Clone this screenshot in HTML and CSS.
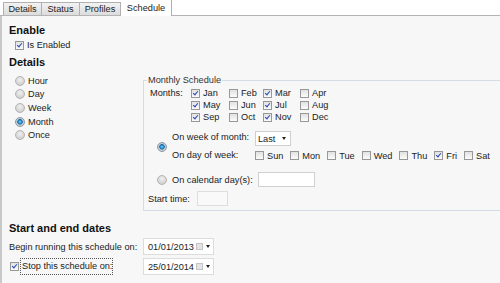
FILE: index.html
```html
<!DOCTYPE html>
<html>
<head>
<meta charset="utf-8">
<link rel="stylesheet" href="styles.css">
</head>
<body>
<div class="tabs">
  <div class="tab tab-details">Details</div>
  <div class="tab tab-status">Status</div>
  <div class="tab tab-profiles">Profiles</div>
  <div class="tab tab-schedule active">Schedule</div>
</div>
<div class="panel">
  <h3 class="heading">Enable</h3>
  <label class="check-row"><input type="checkbox" class="cb" checked><span>Is Enabled</span></label>
  <h3 class="heading h-details">Details</h3>
  <div class="details">
    <div class="freq">
      <label class="radio-row"><input type="radio" name="freq" class="rb"><span>Hour</span></label>
      <label class="radio-row"><input type="radio" name="freq" class="rb"><span>Day</span></label>
      <label class="radio-row"><input type="radio" name="freq" class="rb"><span>Week</span></label>
      <label class="radio-row"><input type="radio" name="freq" class="rb" checked><span>Month</span></label>
      <label class="radio-row"><input type="radio" name="freq" class="rb"><span>Once</span></label>
    </div>
    <fieldset class="monthly">
      <legend class="legend">Monthly Schedule</legend>
      <div class="months">
        <span class="months-label">Months:</span>
        <div class="month-grid">
          <label class="opt"><input type="checkbox" class="cb" checked><span>Jan</span></label>
          <label class="opt"><input type="checkbox" class="cb"><span>Feb</span></label>
          <label class="opt"><input type="checkbox" class="cb" checked><span>Mar</span></label>
          <label class="opt"><input type="checkbox" class="cb"><span>Apr</span></label>
          <label class="opt"><input type="checkbox" class="cb" checked><span>May</span></label>
          <label class="opt"><input type="checkbox" class="cb"><span>Jun</span></label>
          <label class="opt"><input type="checkbox" class="cb" checked><span>Jul</span></label>
          <label class="opt"><input type="checkbox" class="cb"><span>Aug</span></label>
          <label class="opt"><input type="checkbox" class="cb" checked><span>Sep</span></label>
          <label class="opt"><input type="checkbox" class="cb"><span>Oct</span></label>
          <label class="opt"><input type="checkbox" class="cb" checked><span>Nov</span></label>
          <label class="opt"><input type="checkbox" class="cb"><span>Dec</span></label>
        </div>
      </div>
      <div class="week-group">
        <input type="radio" name="mode" class="rb" checked>
        <div class="week-grid">
          <span class="wlabel">On week of month:</span>
          <span class="select">Last<i class="caret"></i></span>
          <span class="wlabel">On day of week:</span>
          <div class="days">
            <label class="opt"><input type="checkbox" class="cb"><span>Sun</span></label>
            <label class="opt"><input type="checkbox" class="cb"><span>Mon</span></label>
            <label class="opt"><input type="checkbox" class="cb"><span>Tue</span></label>
            <label class="opt"><input type="checkbox" class="cb"><span>Wed</span></label>
            <label class="opt"><input type="checkbox" class="cb"><span>Thu</span></label>
            <label class="opt"><input type="checkbox" class="cb" checked><span>Fri</span></label>
            <label class="opt"><input type="checkbox" class="cb"><span>Sat</span></label>
          </div>
        </div>
      </div>
      <div class="cal-row">
        <input type="radio" name="mode" class="rb">
        <span class="cal-label">On calendar day(s):</span>
        <span class="textbox cal-box"></span>
      </div>
      <div class="time-row">
        <span class="time-label">Start time:</span>
        <span class="textbox time-box"></span>
      </div>
    </fieldset>
  </div>
  <h3 class="heading h-dates">Start and end dates</h3>
  <div class="date-row">
    <span class="date-label">Begin running this schedule on:</span>
    <span class="datebox">01/01/2013<i class="cal-icon"></i><i class="caret"></i></span>
  </div>
  <div class="date-row">
    <label class="date-label stop"><input type="checkbox" class="cb" checked><span class="focus">Stop this schedule on:</span></label>
    <span class="datebox">25/01/2014<i class="cal-icon"></i><i class="caret"></i></span>
  </div>
</div>
</body>
</html>
```
FILE: styles.css
```css
html, body {
  margin: 0;
  padding: 0;
  background: #fff;
  overflow: hidden;
}
body {
  width: 500px;
  height: 283px;
  font-family: "Liberation Sans", Arial, sans-serif;
  font-size: 9.2px;
  color: #222;
}

/* tabs */
.tabs {
  display: flex;
  align-items: flex-end;
  height: 16px;
  box-sizing: border-box;
  padding-left: 3px;
  border-bottom: 1px solid #b4b4b4;
}
.tab {
  box-sizing: border-box;
  height: 13px;
  line-height: 12px;
  text-align: center;
  border: 1px solid #b0b0b0;
  border-bottom: none;
  border-left: none;
  background: linear-gradient(#f2f2f2, #dcdcdc);
  color: #222;
}
.tab:first-child {
  border-left: 1px solid #b0b0b0;
}
.tab-details { width: 39px; }
.tab-status { width: 38px; }
.tab-profiles { width: 41px; }
.tab-schedule { width: 51px; }
.tab.active {
  height: 17px;
  line-height: 17px;
  margin-bottom: -1px;
  background: #fff;
  border-right: 1px solid #b0b0b0;
}

/* panel */
.panel {
  height: 267px;
  box-sizing: border-box;
  background: #f7f7f7;
  border-left: 2px solid #c9c9c9;
  padding: 8px 0 0 7px;
  overflow: hidden;
}
.heading {
  margin: 0;
  font-size: 11px;
  line-height: 13px;
  font-weight: bold;
  color: #111;
}
.h-details { margin-top: 5px; }
.h-dates { margin-top: 11px; }

/* checkbox & radio */
.cb {
  appearance: none;
  -webkit-appearance: none;
  margin: 0;
  width: 9px;
  height: 9px;
  box-sizing: border-box;
  border: 1px solid #989898;
  background: linear-gradient(#e2e2e2, #fbfbfb);
  position: relative;
  flex: none;
}
.cb:checked::after {
  content: "";
  position: absolute;
  left: 2px;
  top: 0;
  width: 2px;
  height: 4px;
  border: solid #2747b5;
  border-width: 0 1.5px 1.5px 0;
  transform: rotate(40deg);
}
.rb {
  appearance: none;
  -webkit-appearance: none;
  margin: 0;
  width: 10px;
  height: 10px;
  box-sizing: border-box;
  border-radius: 50%;
  border: 1px solid #b4b4b4;
  background: radial-gradient(circle at 50% 35%, #f0f0f0 0, #d6d6d6 60%, #c4c4c4 100%);
  flex: none;
}
.rb:checked {
  border-color: #8a98a6;
  background: radial-gradient(circle at 50% 48%, #7fd6ff 0, #2a96d8 25%, #1f6aa3 42%, #b9c4ce 52%, #e2e6ea 100%);
}

.check-row {
  display: flex;
  align-items: center;
  gap: 3px;
  height: 12px;
  margin: 2px 0 0 6px;
}

/* details */
.details {
  display: flex;
  align-items: flex-start;
}
.freq {
  width: 134px;
  flex: none;
  padding-top: 5px;
}
.radio-row {
  display: flex;
  align-items: center;
  gap: 3px;
  height: 13.6px;
  margin-left: 6px;
}
.monthly {
  flex: 1;
  margin: 5px -30px 0 0;
  padding: 0 0 4px 4px;
  border: 1px solid #d3dde7;
  min-width: 0;
}
.legend {
  padding: 0 1px;
  margin-left: -1px;
  line-height: 12px;
  color: #333;
}
.months {
  display: flex;
  padding-top: 1px;
}
.months-label {
  width: 43px;
  padding-left: 2px;
  box-sizing: border-box;
  line-height: 12px;
}
.month-grid {
  display: grid;
  grid-template-columns: 38px 34px 37px auto;
  grid-auto-rows: 12px;
}
.opt {
  display: flex;
  align-items: center;
  gap: 3px;
}

.week-group {
  display: flex;
  align-items: center;
  margin: 8px 0 0 9px;
}
.week-group .rb { margin-right: 5px; }
.week-grid {
  display: grid;
  grid-template-columns: 83px auto;
  grid-template-rows: 15px 15px;
  row-gap: 2px;
}
.wlabel {
  line-height: 12px;
}
.week-grid .wlabel:nth-of-type(3) {
  line-height: 15px;
}
.select {
  display: flex;
  align-items: center;
  width: 36px;
  height: 15px;
  box-sizing: border-box;
  border: 1px solid #cfcfcf;
  background: #fff;
  padding-left: 2px;
}
.caret {
  width: 0;
  height: 0;
  border-left: 2.5px solid transparent;
  border-right: 2.5px solid transparent;
  border-top: 3px solid #222;
  margin-left: auto;
  margin-right: 4px;
}
.days {
  display: flex;
  align-items: center;
  gap: 7px;
}

.cal-row {
  display: flex;
  align-items: center;
  height: 15px;
  margin: 9px 0 0 9px;
}
.cal-row .rb { margin-right: 5px; }
.cal-label { width: 86px; }
.textbox {
  height: 15px;
  box-sizing: border-box;
  border: 1px solid #d0d0d0;
  background: #fff;
}
.cal-box { width: 57px; }
.time-row {
  display: flex;
  align-items: center;
  height: 15px;
  margin-top: 4px;
}
.time-label { width: 49px; }
.time-box {
  width: 31px;
  background: #f9f9f9;
  border-color: #dedede;
}

/* dates */
.date-row {
  display: flex;
  align-items: center;
  height: 17px;
  margin-top: 3px;
}
.date-label {
  width: 134px;
  flex: none;
}
.stop {
  display: flex;
  align-items: center;
  gap: 2px;
  padding-left: 1px;
  box-sizing: border-box;
}
.focus {
  outline: 1px dotted #555;
  padding: 2px 0 3px 1px;
}
.datebox {
  display: flex;
  align-items: center;
  width: 71px;
  height: 17px;
  box-sizing: border-box;
  border: 1px solid #dcdcdc;
  background: #fff;
  padding-left: 4px;
  color: #222;
}
.cal-icon {
  width: 7px;
  height: 7px;
  box-sizing: border-box;
  border: 1px solid #c4c4c4;
  background: #e4e4e4;
  margin-left: 2px;
}
.datebox .caret {
  margin-left: 3px;
  margin-right: 0;
}
```
